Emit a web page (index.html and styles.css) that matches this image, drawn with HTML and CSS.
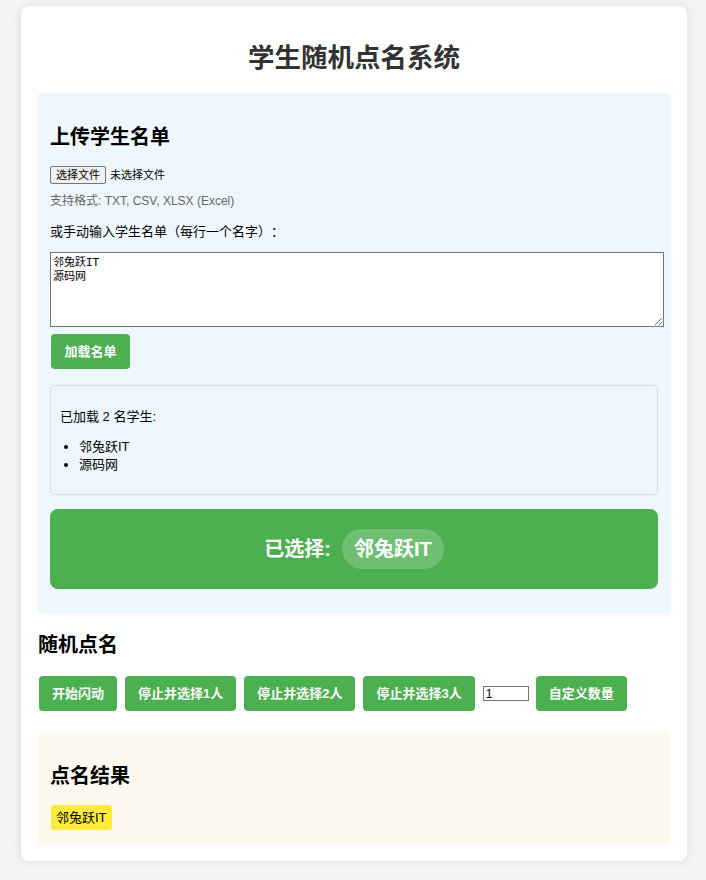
FILE: index.html
```html
<!DOCTYPE html>
<html lang="zh-CN">
<head>
<meta charset="utf-8">
<title>学生随机点名系统</title>
<link rel="stylesheet" href="styles.css">
</head>
<body>
<div class="container">
  <h1 class="title">学生随机点名系统</h1>

  <section class="upload">
    <h2 class="sec-title">上传学生名单</h2>
    <div class="file-row">
      <span class="file-btn">选择文件</span>
      <span class="file-name">未选择文件</span>
    </div>
    <p class="hint">支持格式: TXT, CSV, XLSX (Excel)</p>
    <p class="label">或手动输入学生名单（每行一个名字）：</p>
    <textarea class="names">邻兔跃IT
源码网</textarea>
    <button class="btn load-btn">加载名单</button>

    <div class="loaded">
      <p class="loaded-title">已加载 2 名学生:</p>
      <ul class="loaded-list">
        <li>邻兔跃IT</li>
        <li>源码网</li>
      </ul>
    </div>

    <div class="banner">
      <span class="banner-label">已选择:</span>
      <span class="pill">邻兔跃IT</span>
    </div>
  </section>

  <h2 class="sec-title roll-title">随机点名</h2>
  <div class="controls">
    <button class="btn">开始闪动</button>
    <button class="btn">停止并选择1人</button>
    <button class="btn">停止并选择2人</button>
    <button class="btn">停止并选择3人</button>
    <input class="count" type="text" value="1">
    <button class="btn">自定义数量</button>
  </div>

  <section class="results">
    <h2 class="sec-title">点名结果</h2>
    <div class="tags">
      <span class="tag">邻兔跃IT</span>
    </div>
  </section>
</div>
</body>
</html>
```

FILE: styles.css
```css
* { box-sizing: border-box; }

html, body {
  margin: 0;
  padding: 0;
}

body {
  background: #f4f4f4;
  font-family: "Liberation Sans", "Noto Sans CJK SC", sans-serif;
  color: #000;
  padding: 6px 19px 19px 21px;
}

.container {
  background: #fff;
  border-radius: 8px;
  box-shadow: 0 0 10px rgba(0, 0, 0, 0.1);
  padding: 16px;
}

.title {
  margin: 20px 0 19px;
  text-align: center;
  font-size: 26.5px;
  line-height: 32px;
  font-weight: bold;
  color: #333;
}

.upload {
  background: #eff7fe;
  border-radius: 5px;
  padding: 13px;
}

.sec-title {
  margin: 19px 0 0;
  font-size: 20px;
  line-height: 24px;
  font-weight: bold;
}

.file-row {
  margin-top: 17px;
  display: flex;
  align-items: center;
  height: 18px;
  font-size: 11px;
}

.file-btn {
  display: inline-block;
  height: 18px;
  line-height: 16px;
  padding: 0 5px;
  border: 1px solid #767676;
  border-radius: 2px;
  background: #efefef;
  font-size: 11px;
}

.file-name {
  margin-left: 4px;
  line-height: 16px;
}

.hint {
  margin: 9px 0 0;
  font-size: 12px;
  line-height: 16px;
  color: #666;
}

.label {
  margin: 13px 0 0;
  font-size: 13px;
  line-height: 18px;
  text-spacing-trim: space-all;
  font-family: "Noto Sans CJK SC", sans-serif;
}

.names {
  display: block;
  box-sizing: content-box;
  width: 100%;
  height: 68px;
  margin: 12px 0 0;
  padding: 3px 2px 2px;
  border: 1px solid #767676;
  background: #fff;
  font-family: "DejaVu Sans Mono", "Noto Sans CJK SC", monospace;
  font-size: 11px;
  line-height: 14px;
  resize: vertical;
}

.btn {
  height: 35px;
  padding: 0 13px;
  border: none;
  border-radius: 4px;
  background: #4caf50;
  color: #fff;
  font-family: "Liberation Sans", "Noto Sans CJK SC", sans-serif;
  font-size: 13px;
  font-weight: bold;
  line-height: 35px;
  white-space: nowrap;
}

.load-btn {
  display: block;
  margin: 7px 0 0 1px;
  width: 79px;
  padding: 0;
}

.loaded {
  margin-top: 16px;
  border: 1px solid #ddd;
  border-radius: 4px;
  padding: 10px 9px;
}

.loaded-title {
  margin: 12px 0 0;
  font-size: 13px;
  line-height: 18px;
}

.loaded-list {
  margin: 12px 0 10px;
  padding-left: 19px;
  font-size: 13px;
  line-height: 18px;
}

.banner {
  margin: 14px 0 12px;
  height: 80px;
  background: #4caf50;
  border-radius: 8px;
  display: flex;
  align-items: center;
  justify-content: center;
  color: #fff;
  font-size: 20px;
  font-weight: bold;
}

.banner-label {
  line-height: 24px;
}

.pill {
  margin-left: 11px;
  padding: 8px 12px;
  line-height: 24px;
  border-radius: 20px;
  background: rgba(255, 255, 255, 0.2);
}

.roll-title {
  margin-left: 1px;
}

.controls {
  margin: 19px 0 0 2px;
  display: flex;
  align-items: center;
  gap: 8px;
}

.count {
  width: 46px;
  height: 15px;
  margin-right: -1px;
  padding: 0 2px;
  border: 1px solid #767676;
  font-family: "Liberation Sans", sans-serif;
  font-size: 12px;
  line-height: 13px;
}

.results {
  margin-top: 21px;
  background: #fdf9ee;
  border-radius: 5px;
  padding: 13px;
}

.tags {
  margin-top: 17px;
  margin-bottom: 2px;
  display: flex;
}

.tag {
  margin-left: 1px;
  padding: 4px 5px;
  background: #ffeb3b;
  border-radius: 3px;
  font-size: 13px;
  line-height: 17px;
}
```
